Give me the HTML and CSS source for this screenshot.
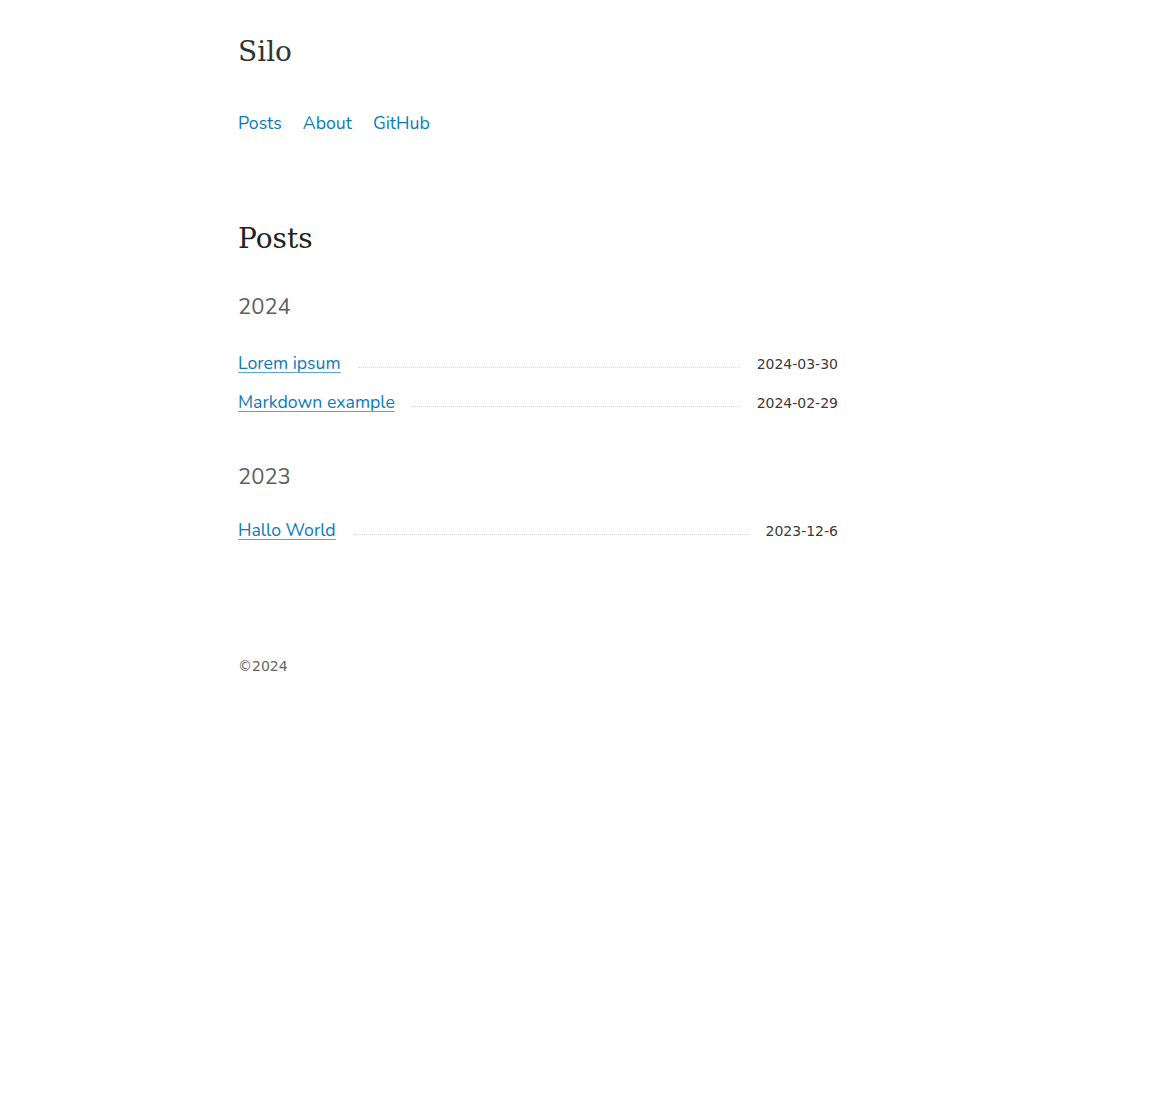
FILE: index.html
```html
<!DOCTYPE html>
<html lang="en">
<head>
<meta charset="utf-8">
<title>Silo</title>
<link rel="stylesheet" href="styles.css">
</head>
<body>
<div class="wrap">
  <header class="site-header">
    <div class="site-title">Silo</div>
    <nav class="nav">
      <a href="#">Posts</a>
      <a href="#">About</a>
      <a href="#">GitHub</a>
    </nav>
  </header>
  <main class="main">
    <h1 class="page-title">Posts</h1>
    <section class="year">
      <h2 class="year-title">2024</h2>
      <ul class="posts">
        <li class="post"><a class="post-link" href="#">Lorem ipsum</a><span class="leader"></span><span class="date">2024-03-30</span></li>
        <li class="post"><a class="post-link" href="#">Markdown example</a><span class="leader"></span><span class="date">2024-02-29</span></li>
      </ul>
    </section>
    <section class="year">
      <h2 class="year-title">2023</h2>
      <ul class="posts">
        <li class="post"><a class="post-link" href="#">Hallo World</a><span class="leader"></span><span class="date">2023-12-6</span></li>
      </ul>
    </section>
  </main>
  <footer class="footer">©2024</footer>
</div>
</body>
</html>
```
FILE: styles.css
```css
html, body { margin: 0; padding: 0; background: #fff; }
body {
  font-family: "Nunito", "Lato", "Noto Sans", sans-serif;
  color: #333;
}
.wrap {
  width: 600px;
  margin-left: 238px;
}
.site-header { padding-top: 32px; }
.site-title {
  font-family: "DejaVu Serif", serif;
  font-size: 28px;
  line-height: 40px;
  color: #333;
}
.nav {
  display: flex;
  gap: 21px;
  margin-top: 39px;
  font-size: 17.7px;
  line-height: 24px;
}
.nav a { color: #0a7bbd; text-decoration: none; }
.main { margin-top: 84px; }
.page-title {
  font-family: "DejaVu Serif", serif;
  font-weight: normal;
  font-size: 28px;
  line-height: 40px;
  margin: 0;
  color: #222;
}
.year-title {
  font-weight: normal;
  font-size: 22px;
  line-height: 32px;
  color: #5c5f66;
  margin: 32px 0 28px;
}
.year + .year .year-title { margin: 32px 0 25px; }
.posts { list-style: none; margin: 0; padding: 0; }
.post {
  display: flex;
  align-items: baseline;
  height: 39px;
}
.post-link {
  color: #0a7bbd;
  font-size: 17.7px;
  text-decoration: underline;
  text-decoration-color: #5aa5d4;
  text-underline-offset: 3px;
}
.leader {
  flex: 1;
  margin: 0 17px;
  border-bottom: 1px dotted #d8d8d8;
  transform: translateY(-1px);
}
.date {
  font-family: "DejaVu Sans", Verdana, sans-serif;
  font-size: 14px;
  color: #3a3a3a;
}
.footer {
  margin-top: 101px;
  font-family: "DejaVu Sans", Verdana, sans-serif;
  font-size: 14px;
  color: #666;
}
```
